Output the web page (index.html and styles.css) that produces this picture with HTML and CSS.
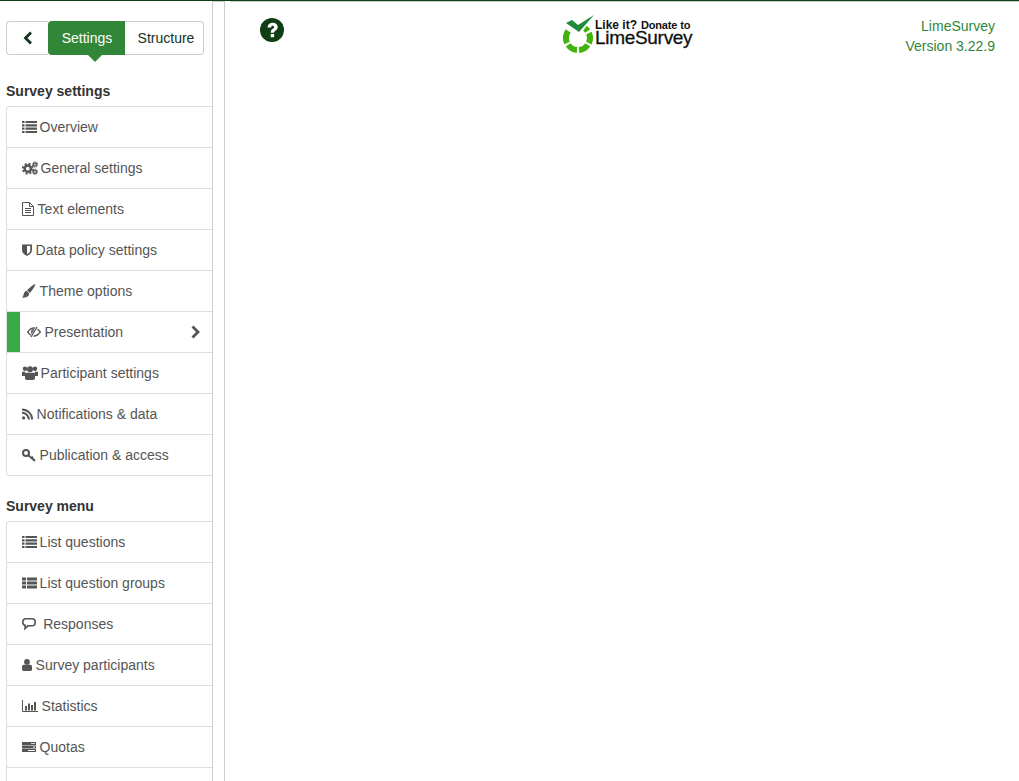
FILE: index.html
```html
<!DOCTYPE html>
<html lang="en">
<head>
<meta charset="utf-8">
<title>LimeSurvey</title>
<link rel="stylesheet" href="styles.css">
</head>
<body>
<div class="page">
  <aside class="sidebar">
    <div class="sidebar-inner">
    <div class="tabs">
      <button class="tab-back" aria-label="Back"><svg class="chev" viewBox="0 0 10 14"><path d="M8 1.500 2.500 7 8 12.500" fill="none" stroke="#14321f" stroke-width="2.800"/></svg></button>
      <button class="tab-active">Settings</button>
      <button class="tab-plain">Structure</button>
    </div>
    <h2 class="heading">Survey settings</h2>
    <ul class="menu">
      <li class="row"><svg class="ico w15" viewBox="0 0 15 12"><path d="M0 0h2.500v2.100H0zM3.500 0H15v2.100H3.500zM0 3.300h2.500v2.100H0zM3.500 3.300H15v2.100H3.500zM0 6.600h2.500v2.100H0zM3.500 6.600H15v2.100H3.500zM0 9.900h2.500V12H0zM3.500 9.900H15V12H3.500z"/></svg><span>Overview</span></li>
      <li class="row"><svg class="ico w15g" viewBox="0 0 16 13"><g fill="none" stroke="#555"><circle cx="5.800" cy="7.200" r="3.100" stroke-width="2.500"/><circle cx="5.800" cy="7.200" r="5" stroke-width="1.800" stroke-dasharray="2.100 1.830"/><circle cx="13" cy="3" r="1.600" stroke-width="1.500"/><circle cx="13" cy="3" r="2.700" stroke-width=".9" stroke-dasharray="1.200 .9"/><circle cx="13" cy="10.300" r="1.600" stroke-width="1.500"/><circle cx="13" cy="10.300" r="2.700" stroke-width=".9" stroke-dasharray="1.200 .9"/></g></svg><span>General settings</span></li>
      <li class="row"><svg class="ico w12" viewBox="0 0 12 14"><path d="M.5.500h7l4 4v9H.500z" fill="none" stroke="#555"/><path d="M7.500.500v4h4M3 6.500h6M3 8.500h6M3 10.500h6" fill="none" stroke="#555"/></svg><span>Text elements</span></li>
      <li class="row"><svg class="ico w10" viewBox="0 0 10 12"><path d="M0 .500h10v5.500c0 3-2.500 4.800-5 6-2.500-1.200-5-3-5-6z"/><path d="M5 2v8.300c1.500-.8 3.300-2 3.300-4.300V2z" fill="#fff"/></svg><span>Data policy settings</span></li>
      <li class="row"><svg class="ico w14" viewBox="0 0 14 14"><path d="M13.200.300c.8.600-2.800 6-5.300 8.700L5 6.200C7.800 3.500 12.500-.3 13.200.300zM4.500 6.800l2.800 2.800c-.2 3-2.800 4.400-7.300 4 1.500-1 1.300-2.300 1.800-3.800.4-1.500 1.700-2.800 2.700-3z"/></svg><span>Theme options</span></li>
      <li class="row row-active"><svg class="ico w14e" viewBox="0 0 14 11"><path d="M.7 5.500C2.500 3 4.500 1.500 7 1.500s4.500 1.500 6.300 4C11.500 8 9.500 9.500 7 9.500S2.500 8 .7 5.500z" fill="none" stroke="#555" stroke-width="1.300"/><path d="M7 2.500a3 3 0 0 0-2 5.300L8.500 2.800A3 3 0 0 0 7 2.500z"/><path d="M10.500 0 4 11" stroke="#fff" stroke-width="2.600"/><path d="M10 .500 4 10.500" stroke="#555" stroke-width="1.300"/></svg><span>Presentation</span><svg class="chev-right" viewBox="0 0 10 14"><path d="M2.500 1.500 8 7l-5.500 5.500" fill="none" stroke="#555" stroke-width="2.800"/></svg></li>
      <li class="row"><svg class="ico w15g" viewBox="0 0 16 14"><circle cx="3" cy="2.700" r="2.200"/><circle cx="13" cy="2.700" r="2.200"/><circle cx="8" cy="3.300" r="3"/><path d="M0 5.800h3.300L3 10H0zM12.700 5.800H16V10h-3zM4.300 6.800h7.400c1 0 1.300 1 1.300 2.200V12c0 1-.7 2-1.800 2H4.800C3.700 14 3 13 3 12V9c0-1.200.3-2.200 1.300-2.200z"/></svg><span>Participant settings</span></li>
      <li class="row"><svg class="ico w11" viewBox="0 0 11 11"><circle cx="1.600" cy="9.400" r="1.600"/><path d="M0 4.200A6.800 6.800 0 0 1 6.800 11M0 .9A10.100 10.100 0 0 1 10.100 11" fill="none" stroke="#555" stroke-width="2"/></svg><span>Notifications &amp; data</span></li>
      <li class="row"><svg class="ico w14" viewBox="0 0 14 13"><circle cx="4" cy="4.500" r="3" fill="none" stroke="#555" stroke-width="2"/><path d="M6.300 6.700 13 12.500M9.500 9.700l1.500-1.400M11.500 11.300l1-1" fill="none" stroke="#555" stroke-width="1.900"/></svg><span>Publication &amp; access</span></li>
    </ul>
    <h2 class="heading">Survey menu</h2>
    <ul class="menu menu-cut">
      <li class="row"><svg class="ico w15" viewBox="0 0 15 12"><path d="M0 0h2.500v2.100H0zM3.500 0H15v2.100H3.500zM0 3.300h2.500v2.100H0zM3.500 3.300H15v2.100H3.500zM0 6.600h2.500v2.100H0zM3.500 6.600H15v2.100H3.500zM0 9.900h2.500V12H0zM3.500 9.900H15V12H3.500z"/></svg><span>List questions</span></li>
      <li class="row"><svg class="ico w15" viewBox="0 0 15 12"><path d="M0 .500h4v3H0zM5 .500h10v3H5zM0 4.500h4v3H0zM5 4.500h10v3H5zM0 8.500h4v3H0zM5 8.500h10v3H5z"/></svg><span>List question groups</span></li>
      <li class="row"><svg class="ico w14r" viewBox="0 0 14 12"><path d="M4 .8h6C12 .8 13.200 2 13.200 4.200S12 7.800 10 7.800H6L3 10.500l.2-3C1.600 7 .8 5.800.8 4.200.8 2 2 .8 4 .8z" fill="none" stroke="#555" stroke-width="1.600"/></svg><span>Responses</span></li>
      <li class="row"><svg class="ico w10" viewBox="0 0 10 12"><circle cx="5" cy="2.900" r="2.900"/><path d="M1.500 5.800h7c1 0 1.500 1 1.500 2.500v2c0 1-.7 1.700-1.500 1.700h-7C.7 12 0 11.300 0 10.300v-2C0 6.800.5 5.800 1.500 5.800z"/></svg><span>Survey participants</span></li>
      <li class="row"><svg class="ico w16" viewBox="0 0 16 12"><path d="M.5 0v11.500H16" fill="none" stroke="#555"/><path d="M3 6h2v4.500H3zM6 3.500h2v7H6zM9 5h2v5.500H9zM12 2h2v8.500h-2z"/></svg><span>Statistics</span></li>
      <li class="row"><svg class="ico w14q" viewBox="0 0 14 10"><path d="M0 0h14v3H0zM0 3.500h14v3H0zM0 7h14v3H0z"/><path d="M9 1h4v.8H9zM11 4.600h2v.8h-2zM6 8.100h7v.8H6z" fill="#fff"/></svg><span>Quotas</span></li>
      <li class="row"></li>
    </ul>
    </div>
  </aside>
  <main class="content">
    <div class="help-col"><svg class="help" viewBox="0 0 24 24"><circle cx="12" cy="12" r="12" fill="#0f3d14"/><path d="M7.500 9.500C7.700 6.500 9.700 4.800 12.700 4.800c3 0 5 1.800 5 4.200 0 1.800-1 2.800-2.300 3.700-1 .7-1.300 1-1.300 2h-3.400c0-2.100.6-3 2-4 .9-.6 1.400-1 1.400-1.700 0-.7-.6-1.200-1.400-1.200-.9 0-1.500.6-1.700 1.700zM10.700 16h3.400v3.200h-3.400z" fill="#fff"/></svg></div>
    <div class="donate">
      <svg class="logo" viewBox="0 0 32 38"><path d="M3 8 9 5l6 5L31 0 16 17z" fill="#1f8a3a"/><g fill="none" stroke="#42b30c" stroke-width="6"><path d="M5.200 16.100A12 12 0 0 0 4.100 28.100"/><path d="M5.200 29.900A12 12 0 0 0 14 35"/><path d="M16 35A12 12 0 0 0 24.800 29.900"/><path d="M25.900 28.100A12 12 0 0 0 25.900 17.900"/><path d="M24.800 16.100A12 12 0 0 0 21.900 13.200"/></g></svg>
      <div class="donate-text"><div class="like"><span class="like-a">Like it?</span> <span class="like-b">Donate to</span></div><div class="brand">LimeSurvey</div></div>
    </div>
    <div class="version">LimeSurvey<br>Version 3.22.9</div>
  </main>
</div>
</body>
</html>
```
FILE: styles.css
```css
* { box-sizing: border-box; }
html, body { margin: 0; height: 100%; overflow: hidden; background: #fff; }
body { font-family: "Liberation Sans", Arial, sans-serif; font-size: 14px; color: #555; }
.page { display: flex; height: 781px; border-top: 1px solid #0f3d14; }
.sidebar { position: relative; width: 225px; flex: none; border-right: 1px solid #ccc; }
.sidebar::before { content: ""; position: absolute; left: 212px; top: 0; width: 13px; height: 1px; background: #ccc; }
.sidebar-inner { width: 213px; height: 100%; padding: 20px 0 0 6px; border-right: 1px solid #ccc; }
.tabs { display: flex; width: 198px; height: 34px; }
.tabs button { font: 14px "Liberation Sans", Arial, sans-serif; height: 34px; padding: 0; }
.tab-back { width: 42px; background: #fff; border: 1px solid #ccc; border-right: 0; border-radius: 4px 0 0 4px; display: flex; align-items: center; justify-content: center; }
.chev { width: 10px; height: 14px; }
.tabs .tab-active { position: relative; width: 77px; padding-left: 1px; background: #328637; color: #fff; border: 0; border-radius: 4px 0 0 4px; }
.tab-active::after { content: ""; position: absolute; left: 40px; top: 34px; border: 7px solid transparent; border-top-color: #328637; border-bottom: 0; }
.tabs .tab-plain { width: 79px; padding-left: 4px; background: #fff; color: #14321f; border: 1px solid #ccc; border-left: 0; border-radius: 0 4px 4px 0; }
.heading { margin: 28px 0 7px; font-size: 14px; line-height: 16px; font-weight: 700; color: #333; }
.menu { list-style: none; margin: 0; padding: 0; width: 206px; border: 1px solid #ddd; border-right: 0; border-radius: 4px 0 0 4px; background: #fff; }
.menu + .heading { margin-top: 22px; }
.menu-cut { border-bottom: 0; }
.row { display: flex; align-items: center; height: 41px; padding-left: 15px; border-bottom: 1px solid #ddd; line-height: 20px; }
.row:last-child { height: 40px; border-bottom: 0; }
.ico { display: block; flex: none; height: 14px; fill: #555; margin-right: 3.600px; }
.w15 { width: 15px; margin-right: 2.600px; }
.w15g { width: 16px; margin-right: 2.600px; }
.w12 { width: 12px; }
.w10 { width: 10px; }
.w14 { width: 14px; }
.w14e { width: 14px; }
.w11 { width: 11px; }
.w14r { width: 14px; margin-right: 7.200px; }
.w16 { width: 16px; }
.w14q { width: 14px; }
.row-active { padding-left: 0; box-shadow: inset 13px 0 0 #3aaa49; }
.row-active .ico { margin-left: 20px; margin-right: 3.500px; }
.chev-right { width: 10px; height: 14px; margin-left: auto; margin-right: 12px; }
.content { position: relative; flex: 1; display: flex; align-items: flex-start; padding-top: 17px; }
.content::before { content: ""; position: absolute; left: 5px; right: 0; top: 0; height: 1px; background: #c4d2c4; }
.help-col { width: 62px; padding-left: 35px; flex: none; }
.help { display: block; width: 24px; height: 24px; }
.donate { margin-left: 276px; margin-top: -3px; display: flex; align-items: flex-start; }
.logo { width: 32px; height: 38px; flex: none; }
.donate-text { color: #111; }
.like { margin-top: 3px; font-weight: 700; line-height: 12px; white-space: nowrap; }
.like-a { font-size: 12px; }
.like-b { font-size: 11px; letter-spacing: -.15px; }
.brand { font-size: 19px; line-height: 14px; letter-spacing: -.3px; -webkit-text-stroke: .3px #111; }
.version { margin-left: auto; margin-right: 24px; margin-top: -2px; text-align: right; color: #328637; line-height: 20px; }
```
